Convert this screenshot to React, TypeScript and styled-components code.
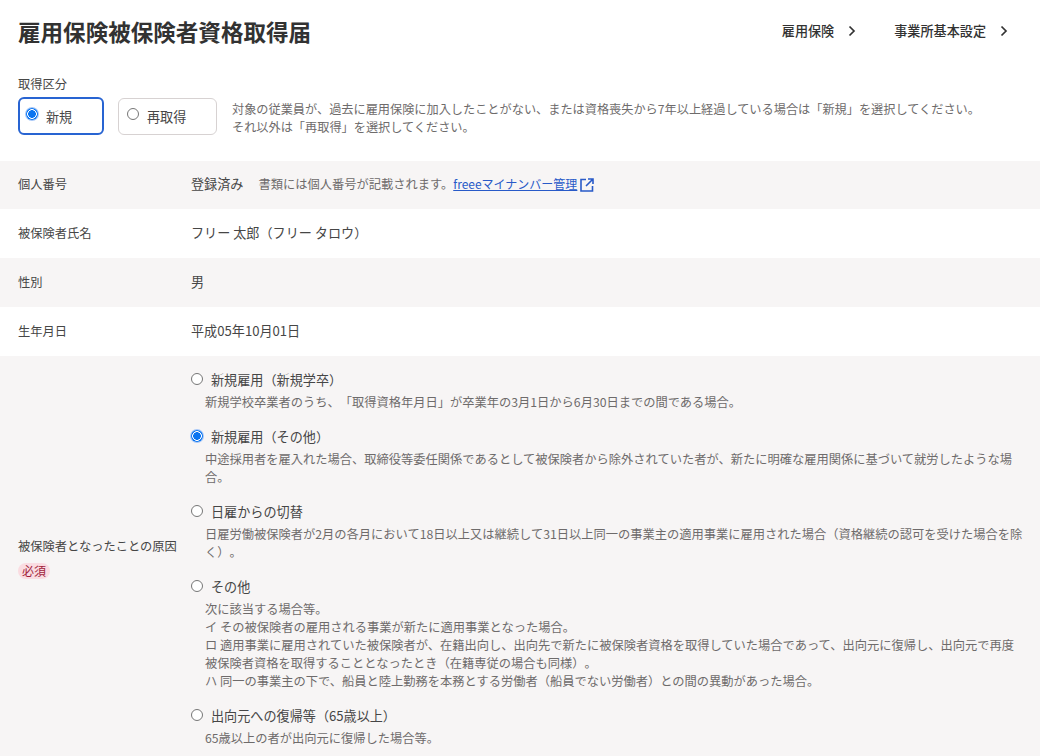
import React from "react";
import styled, { createGlobalStyle } from "styled-components";

const Global = createGlobalStyle`
  html, body { margin: 0; padding: 0; background: #fff; }
  body { height: 756px; overflow: hidden; font-family: "Noto Sans CJK JP", "Noto Sans", sans-serif; color: #323232; text-spacing-trim: space-all; }
`;
const Page = styled.div`width: 1040px; height: 756px; overflow: hidden;`;
const Header = styled.header`
  display: flex; justify-content: space-between; align-items: center;
  height: 62px; padding: 0 32px 0 18px;
`;
const Title = styled.h1`margin: 0; font-size: 22.55px; line-height: 30px; font-weight: 700; color: #323232;`;
const Nav = styled.nav`display: flex; gap: 38px;`;
const NavLink = styled.a`
  display: flex; align-items: center; gap: 14px;
  font-size: 13.125px; line-height: 20px; font-weight: 500; color: #323232;
`;
const Section = styled.section`padding: 14px 18px 0; height: 85px;`;
const FieldLabel = styled.div`font-size: 12.25px; line-height: 16px; color: #464646;`;
const TypeRow = styled.div`display: flex; align-items: center; margin-top: 5px; height: 38px;`;
const TypeCard = styled.label<{ $on?: boolean; $w: number }>`
  box-sizing: border-box; width: ${p => p.$w}px; height: ${p => p.$on ? 38 : 37}px;
  display: flex; align-items: center; gap: 8px; padding: 0 0 0 ${p => p.$on ? 6 : 8}px;
  margin-right: ${p => p.$on ? 14 : 15}px;
  border-radius: 6px; background: #fff;
  border: ${p => p.$on ? "2px solid #2864d2" : "1px solid #d7d2d2"};
  font-size: 13.125px; color: #464646;
`;
const Help = styled.p`margin: 3px 0 0; font-size: 12.18px; line-height: 18px; color: #6e6b6b;`;
const Row = styled.div<{ $shade?: boolean; $h?: number }>`
  display: flex; align-items: center; height: ${p => p.$h ? `${p.$h}px` : "49px"};
  padding-left: 18px; background: ${p => p.$shade ? "#f7f5f5" : "#fff"};
`;
const RowLabel = styled.div`width: 173px; flex: none; font-size: 12.25px; line-height: 16px; color: #464646; margin-top: -2px;`;
const Value = styled.div`display: flex; align-items: center; font-size: 13.125px; line-height: 18px; color: #464646; margin-top: -2px;`;
const Note = styled.span`margin-left: 15px; font-size: 12.25px; color: #6e6b6b;`;
const Link = styled.a`color: #285ac8; font-size: 12px; text-decoration: underline;`;
const ExtIcon = styled.svg`width: 16px; height: 16px; margin-left: 2px; margin-top: 2px; flex: none;`;
const CauseRow = styled.div`
  display: flex; padding: 14px 0 0 18px; background: #f7f5f5; height: 400px; box-sizing: border-box;
`;
const CauseLabel = styled.div`
  width: 172px; flex: none; padding-top: 168px; font-size: 12.25px; line-height: 16px; color: #464646;
`;
const Required = styled.span`
  display: block; width: 32px; height: 16px; margin-top: 9px; border-radius: 8px;
  background: #fadce1; color: #a01e3c; font-size: 12px; line-height: 16px; text-align: center;
`;
const Options = styled.div`display: flex; flex-direction: column; width: 850px;`;
const Option = styled.div`margin-bottom: 16px;`;
const OptionHead = styled.label`display: flex; align-items: center; gap: 8px; height: 18px; color: #464646;`;
const OptionTitle = styled.span`font-size: 13.125px;`;
const OptionDesc = styled.div`margin: 5px 0 0 15px; font-size: 12.25px; line-height: 18px; color: #6e6b6b; white-space: nowrap;`;
const RadioDot = styled.span<{ $on?: boolean }>`
  box-sizing: border-box; width: 12px; height: 12px; border-radius: 50%; flex: none; background: #fff;
  margin: 0 0 0 1px;
  border: ${p => p.$on ? "none" : "1px solid #767676"};
  ${p => p.$on ? "background: radial-gradient(circle, #0a74f0 0 3.6px, #fff 4px 4.6px, #0a74f0 5px); box-shadow: 0 0 0 1px #a8c8f8;" : ""}
`;
const CardRadio = styled(RadioDot)`margin: 0 0 4px;`;
const Chevron = () => (
  <svg width="8" height="12" viewBox="0 0 8 12" fill="none"><path d="M1.5 1.5 6 6l-4.5 4.5" stroke="#323232" strokeWidth="1.7" /></svg>
);

const rows = [
  { label: "新規雇用（新規学卒）", on: false, desc: ["新規学校卒業者のうち、「取得資格年月日」が卒業年の3月1日から6月30日までの間である場合。"] },
  { label: "新規雇用（その他）", on: true, desc: ["中途採用者を雇入れた場合、取締役等委任関係であるとして被保険者から除外されていた者が、新たに明確な雇用関係に基づいて就労したような場", "合。"] },
  { label: "日雇からの切替", on: false, desc: ["日雇労働被保険者が2月の各月において18日以上又は継続して31日以上同一の事業主の適用事業に雇用された場合（資格継続の認可を受けた場合を除", "く）。"] },
  { label: "その他", on: false, desc: ["次に該当する場合等。", "イ その被保険者の雇用される事業が新たに適用事業となった場合。", "ロ 適用事業に雇用されていた被保険者が、在籍出向し、出向先で新たに被保険者資格を取得していた場合であって、出向元に復帰し、出向元で再度", "被保険者資格を取得することとなったとき（在籍専従の場合も同様）。", "ハ 同一の事業主の下で、船員と陸上勤務を本務とする労働者（船員でない労働者）との間の異動があった場合。"] },
  { label: "出向元への復帰等（65歳以上）", on: false, desc: ["65歳以上の者が出向元に復帰した場合等。"] },
];

export default function App() {
  return (
    <Page>
      <Global />
      <Header>
        <Title>雇用保険被保険者資格取得届</Title>
        <Nav>
          <NavLink>雇用保険<Chevron /></NavLink>
          <NavLink>事業所基本設定<Chevron /></NavLink>
        </Nav>
      </Header>
      <Section>
        <FieldLabel>取得区分</FieldLabel>
        <TypeRow>
          <TypeCard $on $w={86}><CardRadio $on />新規</TypeCard>
          <TypeCard $w={99}><CardRadio />再取得</TypeCard>
          <Help>対象の従業員が、過去に雇用保険に加入したことがない、または資格喪失から7年以上経過している場合は「新規」を選択してください。<br />それ以外は「再取得」を選択してください。</Help>
        </TypeRow>
      </Section>
      <Row $shade $h={48}>
        <RowLabel>個人番号</RowLabel>
        <Value>登録済み<Note>書類には個人番号が記載されます。<Link>freeeマイナンバー管理</Link></Note>
          <ExtIcon viewBox="0 0 16 16" fill="none"><path d="M7 2.5H2v11.5h11.5V9M9 2h5v5M14 2 7 9" stroke="#285ac8" strokeWidth="1.6" /></ExtIcon>
        </Value>
      </Row>
      <Row><RowLabel>被保険者氏名</RowLabel><Value>フリー 太郎（フリー タロウ）</Value></Row>
      <Row $shade><RowLabel>性別</RowLabel><Value>男</Value></Row>
      <Row><RowLabel>生年月日</RowLabel><Value>平成05年10月01日</Value></Row>
      <CauseRow>
        <CauseLabel>被保険者となったことの原因<Required>必須</Required></CauseLabel>
        <Options>
          {rows.map(r => (
            <Option key={r.label}>
              <OptionHead><RadioDot $on={r.on} /><OptionTitle>{r.label}</OptionTitle></OptionHead>
              <OptionDesc>{r.desc.map(d => <div key={d}>{d}</div>)}</OptionDesc>
            </Option>
          ))}
        </Options>
      </CauseRow>
    </Page>
  );
}
